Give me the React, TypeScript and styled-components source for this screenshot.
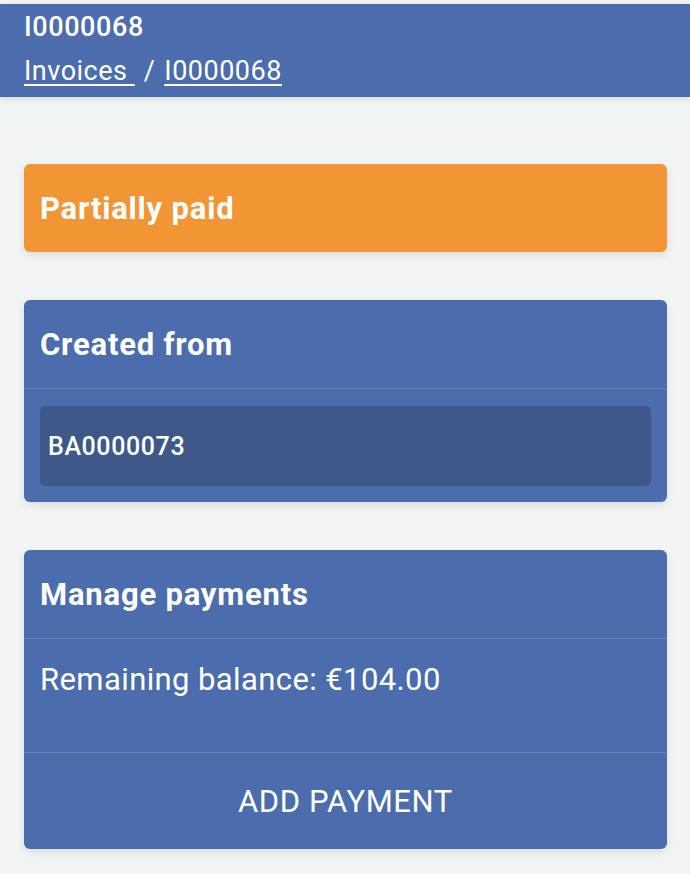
import React from "react";
import styled, { createGlobalStyle } from "styled-components";

const COLORS = {
  Blue: "#4b6cad",
  DarkBlue: "#3d5889",
  Orange: "#f19535",
  Page: "#f3f4f4",
  White: "#ffffff",
};

const GlobalStyle = createGlobalStyle`
  html, body {
    margin: 0;
    padding: 0;
    background: ${COLORS.Page};
    font-family: Roboto, "Liberation Sans", sans-serif;
    color: ${COLORS.White};
  }
`;

export default function App() {
  return (
    <>
      <GlobalStyle />
      <Page>
        <Header>
          <Title>I0000068</Title>
          <Breadcrumbs>
            <Crumb href="#">Invoices&nbsp;</Crumb>
            <Separator>/</Separator>
            <Crumb href="#">I0000068</Crumb>
          </Breadcrumbs>
        </Header>

        <Content>
          <StatusCard>
            <CardTitle>Partially paid</CardTitle>
          </StatusCard>

          <Card>
            <CardTitle>Created from</CardTitle>
            <CardBody>
              <SourceItem>BA0000073</SourceItem>
            </CardBody>
          </Card>

          <Card>
            <CardTitle>Manage payments</CardTitle>
            <BalanceRow>Remaining balance: €104.00</BalanceRow>
            <ActionButton>ADD PAYMENT</ActionButton>
          </Card>
        </Content>
      </Page>
    </>
  );
}

const Page = styled.div`
  padding-top: 4px;
  min-height: 870px;
  background: ${COLORS.Page};
`;

const Header = styled.header`
  display: flex;
  flex-direction: column;
  height: 93px;
  padding: 7px 24px 0;
  box-sizing: border-box;
  background: ${COLORS.Blue};
  box-shadow: 0 2px 6px rgba(0, 0, 0, 0.12);
`;

const Title = styled.div`
  font-size: 27px;
  font-weight: 500;
  line-height: 32px;
  letter-spacing: 0.6px;
`;

const Breadcrumbs = styled.div`
  display: flex;
  align-items: center;
  margin-top: 12px;
  font-size: 27px;
  line-height: 32px;
  letter-spacing: 0.5px;
`;

const Crumb = styled.a`
  color: ${COLORS.White};
  text-decoration: underline;
  text-underline-offset: 4px;
  text-decoration-thickness: 2px;
`;

const Separator = styled.span`
  padding: 0 9px;
`;

const Content = styled.main`
  display: flex;
  flex-direction: column;
  gap: 48px;
  padding: 67px 23px 24px 24px;
`;

const Card = styled.section`
  display: flex;
  flex-direction: column;
  background: ${COLORS.Blue};
  border-radius: 6px;
  box-shadow: 0 3px 10px rgba(0, 0, 0, 0.1);
  overflow: hidden;
`;

const StatusCard = styled(Card)`
  background: ${COLORS.Orange};
`;

const CardTitle = styled.h2`
  margin: 0;
  height: 88px;
  display: flex;
  align-items: center;
  padding: 0 16px;
  font-size: 31px;
  font-weight: 700;
  letter-spacing: 0.8px;
`;

const CardBody = styled.div`
  padding: 17px 16px 16px;
  border-top: 1px solid rgba(255, 255, 255, 0.15);
`;

const SourceItem = styled.div`
  display: flex;
  align-items: center;
  height: 80px;
  padding: 0 8px;
  background: ${COLORS.DarkBlue};
  border-radius: 5px;
  font-size: 25px;
  font-weight: 500;
  letter-spacing: 0.6px;
`;

const BalanceRow = styled.div`
  height: 114px;
  padding: 22px 16px 0;
  box-sizing: border-box;
  border-top: 1px solid rgba(255, 255, 255, 0.15);
  font-size: 31px;
  letter-spacing: 0.4px;
`;

const ActionButton = styled.button`
  height: 97px;
  border: none;
  border-top: 1px solid rgba(255, 255, 255, 0.15);
  background: none;
  color: ${COLORS.White};
  font-family: inherit;
  font-size: 31px;
  letter-spacing: 0.6px;
  cursor: pointer;
`;
